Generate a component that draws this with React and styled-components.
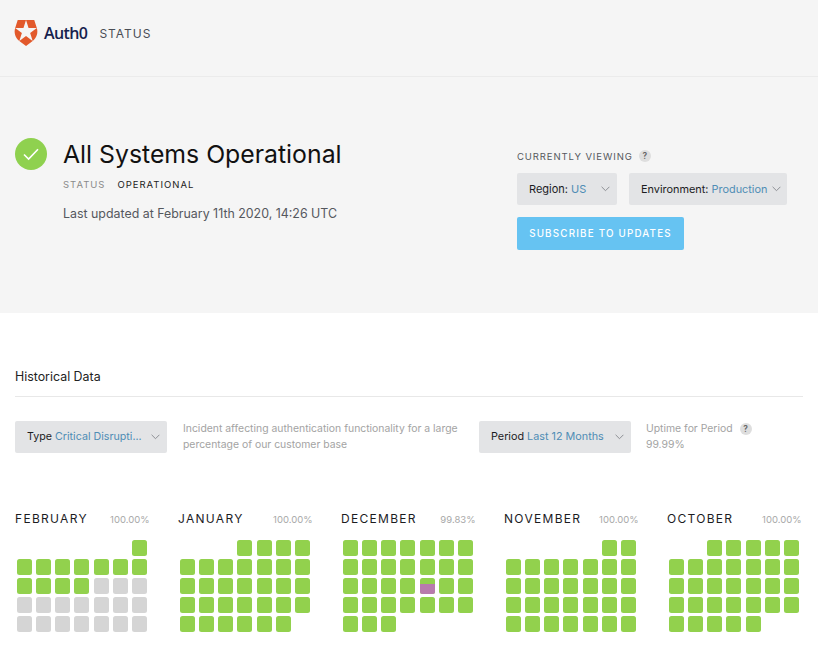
import React from "react";
import styled, { createGlobalStyle } from "styled-components";

const Global = createGlobalStyle`
  html, body { margin: 0; padding: 0; background: #fff; }
  body { font-family: Inter, "Liberation Sans", sans-serif; color: #16181c; -webkit-font-smoothing: antialiased; }
  * { box-sizing: border-box; }
`;

const Header = styled.header`
  height: 77px;
  background: #f5f5f5;
  border-bottom: 1px solid #ebebeb;
  display: flex;
  align-items: flex-start;
  padding: 20px 15px 0;
`;
const LogoMark = styled.svg`
  width: 26px;
  height: 26px;
  margin-left: -2px;
  flex: none;
`;
const Wordmark = styled.span`
  font-family: "Open Sans", sans-serif;
  font-size: 16px;
  font-weight: 600;
  color: #16214d;
  margin-left: 5px;
  line-height: 26px;
  letter-spacing: -0.6px;
`;
const HeaderLabel = styled.span`
  font-size: 12px;
  letter-spacing: 1px;
  color: #4a4d55;
  margin-left: 12px;
  line-height: 27px;
`;
const Hero = styled.section`
  height: 236px;
  background: #f5f5f5;
  display: flex;
  justify-content: space-between;
  padding: 61px 31px 0 15px;
`;
const StatusBlock = styled.div`
  display: flex;
  gap: 16px;
`;
const CheckCircle = styled.div`
  width: 32px;
  height: 32px;
  border-radius: 50%;
  background: #8fd14f;
  display: flex;
  align-items: center;
  justify-content: center;
`;
const StatusText = styled.div`
  display: flex;
  flex-direction: column;
`;
const Title = styled.h1`
  margin: 0;
  font-size: 24.8px;
  font-weight: 400;
  line-height: 32px;
  color: #111;
`;
const StatusLine = styled.div`
  display: flex;
  gap: 12px;
  margin-top: 8px;
  font-size: 9.5px;
  letter-spacing: 1px;
  line-height: 14px;
`;
const StatusKey = styled.span`
  color: #8a8a8a;
`;
const StatusValue = styled.span`
  color: #222;
`;
const Updated = styled.div`
  margin-top: 13px;
  font-size: 12.4px;
  line-height: 18px;
  color: #55585e;
`;
const ViewPanel = styled.div`
  width: 270px;
  padding-top: 10px;
`;
const ViewLabel = styled.div`
  display: flex;
  align-items: center;
  gap: 6px;
  height: 16px;
  font-size: 9.5px;
  letter-spacing: 0.9px;
  color: #55585e;
`;
const Help = styled.span`
  width: 12px;
  height: 12px;
  border-radius: 50%;
  background: #dedede;
  color: #666;
  font-size: 8.5px;
  font-weight: 600;
  letter-spacing: 0;
  display: inline-flex;
  align-items: center;
  justify-content: center;
`;
const SelectRow = styled.div`
  display: flex;
  gap: 12px;
  margin-top: 9px;
`;
const Select = styled.div`
  width: ${(p) => p.$w}px;
  height: 32px;
  flex: none;
  background: #e3e4e6;
  border-radius: 2px;
  display: flex;
  align-items: center;
  justify-content: space-between;
  padding: 0 ${(p) => p.$pr}px 0 12px;
  font-size: ${(p) => p.$fs || 11}px;
  color: #1c1c1f;
  white-space: nowrap;
`;
const SelectLabel = styled.span`
  position: relative;
  top: ${(p) => p.$lift || 0}px;
`;
const SelectValue = styled.span`
  color: #4f8db5;
`;
const SubscribeButton = styled.button`
  display: block;
  margin-top: 12px;
  width: 167px;
  height: 33px;
  border: 0;
  padding: 0;
  border-radius: 2px;
  background: #66c3f2;
  color: #fff;
  font-family: inherit;
  font-size: 9.8px;
  font-weight: 500;
  letter-spacing: 1.2px;
`;
const History = styled.section`
  padding: 56px 15px 0;
`;
const SectionTitle = styled.h2`
  margin: 0;
  font-size: 12.4px;
  font-weight: 400;
  line-height: 16px;
  padding-bottom: 11px;
  border-bottom: 1px solid #e8e8e8;
  color: #222;
`;
const FilterRow = styled.div`
  display: flex;
  align-items: flex-start;
  margin-top: 24px;
`;
const FilterNote = styled.div`
  font-size: 10.4px;
  line-height: 16px;
  color: #a3a3a3;
  width: ${(p) => p.$w}px;
  margin-left: ${(p) => p.$ml}px;
  flex: none;
`;
const UptimeHead = styled.div`
  display: flex;
  align-items: center;
  gap: 7px;
`;
const Months = styled.div`
  display: flex;
  gap: 28.5px;
  margin-top: 57px;
`;
const Month = styled.div`
  width: 134.5px;
`;
const MonthHead = styled.div`
  display: flex;
  justify-content: space-between;
  align-items: center;
  height: 16px;
`;
const MonthName = styled.span`
  font-size: 12px;
  letter-spacing: 1.3px;
  color: #1c1c1f;
`;
const MonthPct = styled.span`
  font-size: 9.5px;
  color: #a8a8a8;
  position: relative;
  top: 1px;
`;
const Grid = styled.div`
  display: grid;
  grid-template-columns: repeat(7, 15px);
  grid-auto-rows: 15.5px;
  column-gap: 4.17px;
  row-gap: 3.5px;
  padding: 14px 0 0 2px;
`;
const Cell = styled.div`
  border-radius: 2.5px;
  overflow: hidden;
  background: ${(p) => ({ ok: "#92d14d", future: "#d5d5d5", none: "transparent", bad: "#92d14d" })[p.$k]};
  display: flex;
  align-items: flex-end;
`;
const Outage = styled.div`
  width: 100%;
  height: 10px;
  background: #b87bad;
`;

const Chevron = () => (
  <svg width="9" height="6" viewBox="0 0 9 6" fill="none" stroke="#8d8f94" strokeWidth="1">
    <path d="M.6.8l3.9 3.9L8.4.8" />
  </svg>
);

const build = (blank, ok, future = 0, rows = 35) => {
  const out = [];
  for (let i = 0; i < blank; i++) out.push("none");
  for (let i = 0; i < ok; i++) out.push("ok");
  for (let i = 0; i < future; i++) out.push("future");
  while (out.length < rows) out.push("none");
  return out;
};

const december = build(0, 31);
december[18] = "bad";

const months = [
  { name: "FEBRUARY", pct: "100.00%", cells: build(6, 12, 17) },
  { name: "JANUARY", pct: "100.00%", cells: build(3, 31) },
  { name: "DECEMBER", pct: "99.83%", cells: december },
  { name: "NOVEMBER", pct: "100.00%", cells: build(5, 30) },
  { name: "OCTOBER", pct: "100.00%", cells: build(2, 31) },
];

export default function App() {
  return (
    <>
      <Global />
      <Header>
        <LogoMark viewBox="0 0 24 24">
          <path
            fill="#e2592b"
            d="M21.98 7.448L19.62 0H4.347l-2.33 7.448c-1.352 4.312.03 9.206 3.815 12.015L12.007 24l6.157-4.552c3.755-2.81 5.182-7.688 3.815-12.015l-6.16 4.58 2.343 7.45-6.157-4.597-6.158 4.58 2.358-7.433-6.188-4.55 7.63-.045L12.008 0l2.356 7.404 7.615.044z"
          />
        </LogoMark>
        <Wordmark>Auth0</Wordmark>
        <HeaderLabel>STATUS</HeaderLabel>
      </Header>
      <Hero>
        <StatusBlock>
          <CheckCircle>
            <svg width="18" height="14" viewBox="0 0 18 14" fill="none" stroke="#fff" strokeWidth="1.6">
              <path d="M2 7.5l4.6 4.6L16 2.2" />
            </svg>
          </CheckCircle>
          <StatusText>
            <Title>All Systems Operational</Title>
            <StatusLine>
              <StatusKey>STATUS</StatusKey>
              <StatusValue>OPERATIONAL</StatusValue>
            </StatusLine>
            <Updated>Last updated at February 11th 2020, 14:26 UTC</Updated>
          </StatusText>
        </StatusBlock>
        <ViewPanel>
          <ViewLabel>
            CURRENTLY VIEWING <Help>?</Help>
          </ViewLabel>
          <SelectRow>
            <Select $w={100} $pr={7}>
              <SelectLabel>
                Region: <SelectValue>US</SelectValue>
              </SelectLabel>
              <Chevron />
            </Select>
            <Select $w={158} $pr={6} $fs={10.9}>
              <SelectLabel>
                Environment: <SelectValue>Production</SelectValue>
              </SelectLabel>
              <Chevron />
            </Select>
          </SelectRow>
          <SubscribeButton>SUBSCRIBE TO UPDATES</SubscribeButton>
        </ViewPanel>
      </Hero>
      <History>
        <SectionTitle>Historical Data</SectionTitle>
        <FilterRow>
          <Select $w={152} $pr={7} $fs={10.7}>
            <SelectLabel $lift={-1}>
              Type <SelectValue>Critical Disrupti...</SelectValue>
            </SelectLabel>
            <Chevron />
          </Select>
          <FilterNote $w={296} $ml={16}>
            Incident affecting authentication functionality for a large percentage of our customer base
          </FilterNote>
          <Select $w={152} $pr={7} $fs={10.8}>
            <SelectLabel $lift={-1}>
              Period <SelectValue>Last 12 Months</SelectValue>
            </SelectLabel>
            <Chevron />
          </Select>
          <FilterNote $w={120} $ml={15}>
            <UptimeHead>
              Uptime for Period <Help>?</Help>
            </UptimeHead>
            99.99%
          </FilterNote>
        </FilterRow>
        <Months>
          {months.map((m) => (
            <Month key={m.name}>
              <MonthHead>
                <MonthName>{m.name}</MonthName>
                <MonthPct>{m.pct}</MonthPct>
              </MonthHead>
              <Grid>
                {m.cells.map((k, i) => (
                  <Cell key={i} $k={k}>
                    {k === "bad" && <Outage />}
                  </Cell>
                ))}
              </Grid>
            </Month>
          ))}
        </Months>
      </History>
    </>
  );
}
